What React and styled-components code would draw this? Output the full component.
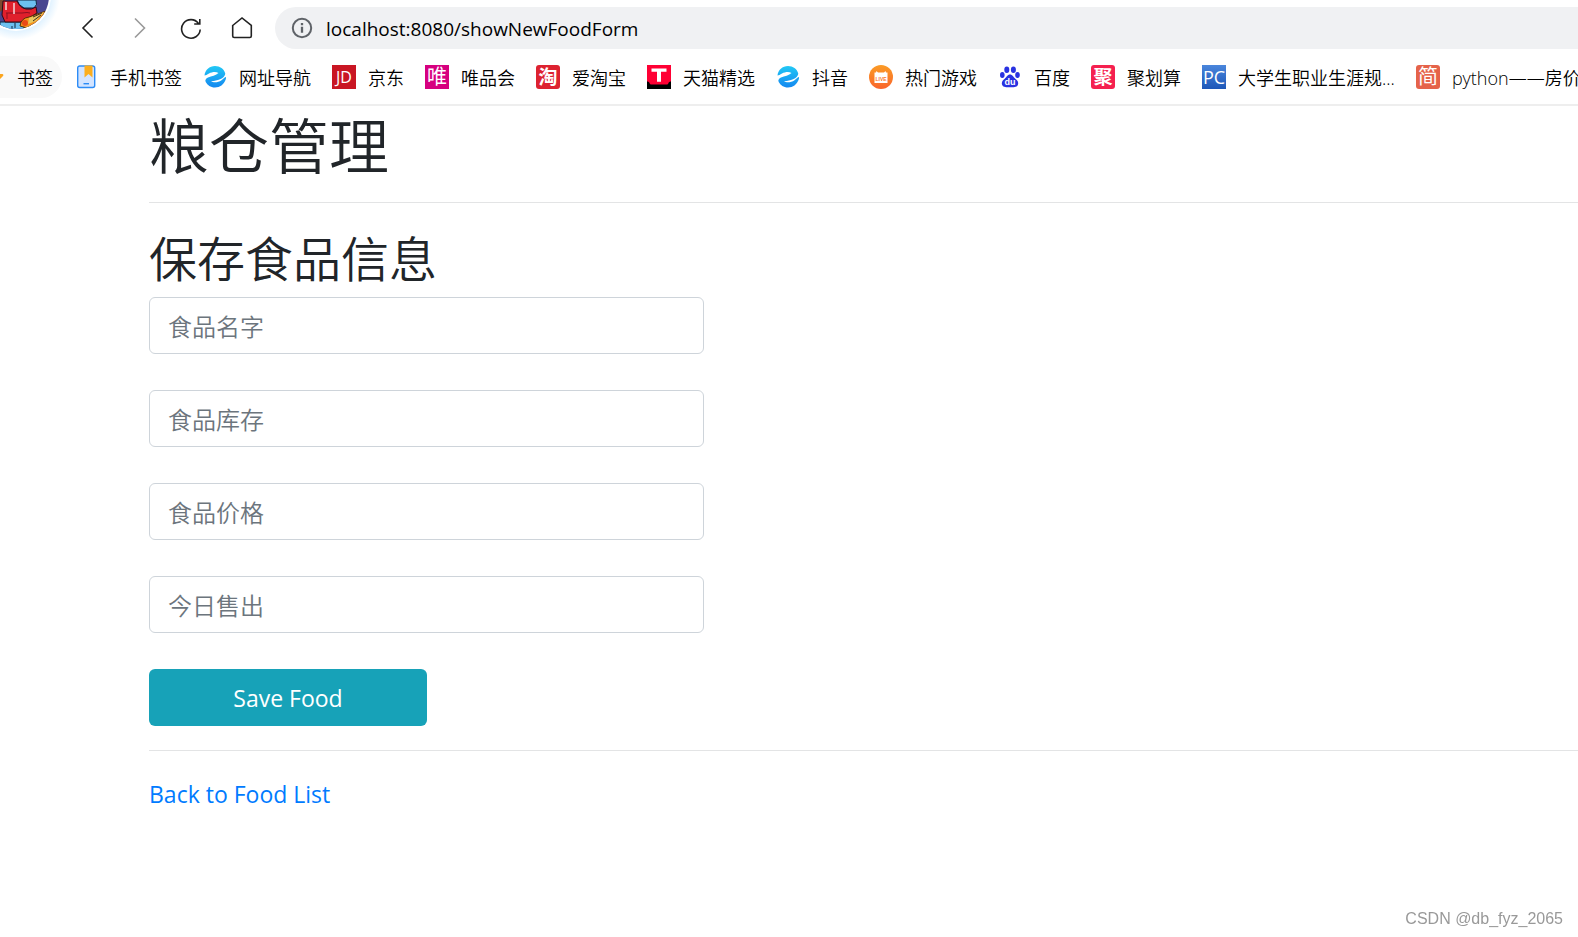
import styled, { createGlobalStyle } from 'styled-components';


const cjk = `"Open Sans", "Noto Sans CJK SC", sans-serif`;

function SwirlIcon() {
    return (
        <svg width="24" height="24" viewBox="0 0 24 24" aria-hidden="true">
            <defs>
                <linearGradient id="swirl" x1="0" y1="0" x2="0" y2="1">
                    <stop offset="0" stopColor="#22c8f5" />
                    <stop offset="1" stopColor="#1488f0" />
                </linearGradient>
            </defs>
            <path fill="url(#swirl)" d="M1.500 10.500C2 5 6.500 1 12 1c5 0 9 3 10.200 7.200C22.500 10.500 20 13 17 14.200c-3 1.300-6.500 2-9 1.800 2.500 2 7 1.500 10.500-.8l3.800-3.200c1.200 0 .7 1.800.2 3C20.800 19.500 17 22.500 12 22.500c-4.500 0-7.500-2.500-9.300-5.500-1-2 .3-3.500 2.300-4.500 3.500-1.500 8-2 10.500-4.500C13 6.500 9 7 6 8.500c-2 1-3.300 2-4.500 2z" />
        </svg>
    );
}

function PhoneIcon() {
    return (
        <svg width="24" height="24" viewBox="0 0 24 24" aria-hidden="true">
            <rect x="3.700" y="1" width="17" height="21.500" rx="2" fill="#d3e4ff" stroke="#2d8cf6" strokeWidth="1.400" />
            <path d="M10.500 0.500h8v12l-4-3.500-4 3.500z" fill="#fcae1d" />
            <path d="M9.500 18.700h5.500" stroke="#2d8cf6" strokeWidth="1.400" />
        </svg>
    );
}

function PawIcon() {
    return (
        <svg width="24" height="24" viewBox="0 0 24 24" fill="#2932e1" aria-hidden="true">
            <ellipse cx="8.800" cy="4.800" rx="2.500" ry="3.200" />
            <ellipse cx="15.400" cy="4.800" rx="2.500" ry="3.200" />
            <ellipse cx="4.300" cy="10" rx="2.300" ry="3" />
            <ellipse cx="19.500" cy="10" rx="2.300" ry="3" />
            <path d="M12 9.500c2.500 0 3.500 2.700 5.300 4.200 2 1.700 3.400 3.300 2.700 5.800-.8 2.800-3.200 2.700-8 2.700s-7.200.1-8-2.700c-.7-2.500.7-4.100 2.700-5.800C8.500 12.200 9.500 9.500 12 9.500z" />
            <text x="12" y="20" textAnchor="middle" fill="#fff" fontSize="9" fontWeight="700" fontFamily="Liberation Sans">du</text>
        </svg>
    );
}

function LiveIcon() {
    return (
        <svg width="24" height="24" viewBox="0 0 24 24" aria-hidden="true">
            <defs>
                <linearGradient id="live" x1="0" y1="0" x2="0" y2="1">
                    <stop offset="0" stopColor="#fb9c26" />
                    <stop offset="1" stopColor="#f9652c" />
                </linearGradient>
            </defs>
            <circle cx="12" cy="12" r="12" fill="url(#live)" />
            <path fill="#fff" d="M7.500 6l1.500 1.500h6L16.500 6l.5 1.500h1.500v10.500H5.500V7.500H7z" />
            <text x="12" y="15.500" textAnchor="middle" fill="#f9752c" fontSize="5" fontWeight="700" fontFamily="Liberation Sans">LIVE</text>
        </svg>
    );
}

function TmallIcon() {
    return (
        <svg width="24" height="24" viewBox="0 0 24 24" aria-hidden="true">
            <rect width="24" height="24" fill="#000" />
            <path fill="#ff0034" d="M0 0h24v16.500c-1.500 0-2 .5-2.500 1.500-.4 1-1 1.500-2 1.500h-15c-1 0-1.600-.5-2-1.500-.5-1-1-1.500-2.500-1.500z" />
            <path fill="#fff" d="M4.500 3.500h15v3.200h-5.500v10h-4v-10H4.500z" />
        </svg>
    );
}

function FolderIcon() {
    return (
        <svg width="24" height="24" viewBox="0 0 24 24" aria-hidden="true">
            <path fill="#fba51f" d="M12 2l3 7 6.500 0q1.500.5.500 2l-5 5 1 7-6-4-6 4 1-7-5-6 7-1z" />
        </svg>
    );
}

function Avatar() {
    return (
        <svg width="62" height="44" viewBox="0 0 62 44" aria-hidden="true">
            <defs>
                <radialGradient id="glow" cx="16" cy="-4" r="44" gradientUnits="userSpaceOnUse">
                    <stop offset="0.760" stopColor="#dcf0ff" />
                    <stop offset="1" stopColor="#fff" />
                </radialGradient>
                <clipPath id="face"><circle cx="16" cy="-4" r="33" /></clipPath>
            </defs>
            <circle cx="16" cy="-4" r="44" fill="url(#glow)" />
            <circle cx="16" cy="-4" r="35" fill="#fff" />
            <g clipPath="url(#face)">
                <rect width="62" height="44" fill="#4a4690" />
                <path d="M0 0h5v8L0 12z" fill="#7a4a30" />
                <path d="M17 0h19q2 5-2 8h-10q-6-3-7-8z" fill="#6cc0f0" stroke="#13243f" />
                <path d="M0 22h24v8H0z" fill="#6cc0f0" stroke="#13243f" />
                <path d="M15 23v5M12 26v4" stroke="#13243f" />
                <path d="M3 1h14q3 7 9 8 6 1 10-2l1 6-8 5-8 4H5l-3-7z" fill="#e0202c" stroke="#2a0c18" />
                <path d="M6 13h16q6-1 8 0M7 13v6" stroke="#8c1020" fill="none" />
                <path d="M6 2v8M14 3v11" stroke="#f4dada" strokeWidth="1.500" />
                <path d="M20 26q1-8 9-9l17-6-7 10-12 7z" fill="#f5941c" stroke="#54300a" />
                <path d="M29 18l15-6-8 9-8 3z" fill="#e8c860" />
                <path d="M33 17l9-4M33 21l8-6" stroke="#3a2a20" />
                <circle cx="25" cy="23" r="3" fill="#ea4a18" />
            </g>
        </svg>
    );
}

const bookmarks = [
    { name: '手机书签', icon: <PhoneIcon /> },
    { name: '网址导航', icon: <SwirlIcon /> },
    { name: '京东', glyph: 'JD', bg: '#c91623', size: 16 },
    { name: '唯品会', glyph: '唯', bg: '#d6007f', size: 20 },
    { name: '爱淘宝', glyph: '淘', bg: '#dd2230', size: 19, round: true, bold: true },
    { name: '天猫精选', icon: <TmallIcon /> },
    { name: '抖音', icon: <SwirlIcon /> },
    { name: '热门游戏', icon: <LiveIcon /> },
    { name: '百度', icon: <PawIcon /> },
    { name: '聚划算', glyph: '聚', bg: '#f5204f', size: 19, round: true, bold: true },
    { name: '大学生职业生涯规...', glyph: 'PC', bg: 'linear-gradient(#4a86dc, #1d57b8)', size: 18 },
    { name: 'python——房价预测', glyph: '简', bg: '#e5634a', size: 20, round: true },
];

const fields = [
    { id: 'name', placeholder: '食品名字' },
    { id: 'stock', placeholder: '食品库存' },
    { id: 'price', placeholder: '食品价格' },
    { id: 'sold', placeholder: '今日售出' },
];

export default function App() {
    return (
        <>
            <GlobalStyle />
            <Browser>
                <AvatarBox><Avatar /></AvatarBox>
                <NavBar>
                    <NavButton aria-label="后退">
                        <svg width="24" height="24" viewBox="0 0 24 24"><path d="M15.500 2.500L6 12l9.500 9.500" /></svg>
                    </NavButton>
                    <NavButton aria-label="前进" disabled>
                        <svg width="24" height="24" viewBox="0 0 24 24"><path d="M7 2.500L16.500 12 7 21.500" /></svg>
                    </NavButton>
                    <NavButton aria-label="刷新">
                        <svg width="24" height="24" viewBox="0 0 24 24"><path d="M21.200 13.500A9.300 9.300 0 1 1 19.500 7.500M20.800 3v5h-5.600" /></svg>
                    </NavButton>
                    <NavButton aria-label="主页">
                        <svg width="24" height="24" viewBox="0 0 24 24"><path d="M2.700 9.500L12 2l9.300 7.500v10.500q0 1.500-1.500 1.500H4.200q-1.500 0-1.500-1.500z" /></svg>
                    </NavButton>
                    <Address>
                        <svg width="22" height="22" viewBox="0 0 22 22" aria-hidden="true">
                            <circle cx="11" cy="11" r="9.200" fill="none" stroke="#5f6368" strokeWidth="2" />
                            <path d="M11 9.800v6M11 6v2.200" stroke="#5f6368" strokeWidth="2.300" />
                        </svg>
                        <input aria-label="地址" defaultValue="localhost:8080/showNewFoodForm" />
                    </Address>
                </NavBar>
                <Bookmarks>
                    <Folder href="#"><FolderIcon /><span>书签</span></Folder>
                    {bookmarks.map(b => (
                        <Bookmark href="#" key={b.name}>
                            {b.icon || <Badge $bg={b.bg} $size={b.size} $round={b.round} $bold={b.bold}>{b.glyph}</Badge>}
                            <span>{b.name}</span>
                        </Bookmark>
                    ))}
                </Bookmarks>
            </Browser>
            <Container>
                <h1>粮仓管理</h1>
                <hr />
                <h2>保存食品信息</h2>
                <Form onSubmit={e => e.preventDefault()}>
                    {fields.map(f => (
                        <Field key={f.id} id={f.id} name={f.id} type="text" aria-label={f.placeholder} placeholder={f.placeholder} />
                    ))}
                    <SaveButton type="submit">Save Food</SaveButton>
                </Form>
                <hr />
                <BackLink href="#">Back to Food List</BackLink>
            </Container>
            <Watermark>CSDN @db_fyz_2065</Watermark>
        </>
    )
}

const GlobalStyle = createGlobalStyle`
    *{
        box-sizing: border-box;
    }
    body{
        margin: 0;
        background: #fff;
        color: #212529;
        font-family: ${cjk};
        overflow-x: hidden;
    }
    input, button{
        font-family: inherit;
    }
`;
const Browser = styled.header`
    position: relative;
    border-bottom: 2px solid #eeeeee;
    overflow: hidden;
`;
/* the profile picture hangs over the corner of the toolbar */
const AvatarBox = styled.div`
    position: absolute;
    top: 0;
    left: 0;
    height: 44px;
`;
const NavBar = styled.nav`
    display: flex;
    align-items: center;
    gap: 27px;
    padding: 7px 0 7px 77px;
`;
const NavButton = styled.button`
    display: flex;
    width: 24px;
    height: 24px;
    padding: 0;
    border: none;
    background: none;
    svg{
        fill: none;
        stroke: #222222;
        stroke-width: 1.6;
    }
    &:disabled svg{
        stroke: #999999;
    }
`;
const Address = styled.div`
    flex: 1;
    display: flex;
    align-items: center;
    gap: 13px;
    height: 42px;
    margin-left: -6px;
    padding-left: 16px;
    border-radius: 21px 0 0 21px;
    background: #f0f1f3;
    input{
        flex: 1;
        padding: 2px 0 0;
        border: none;
        outline: none;
        background: none;
        color: #000;
        font-size: 19px;
        line-height: 28px;
    }
`;
const Bookmarks = styled.div`
    display: flex;
    align-items: center;
    gap: 21px;
    height: 48px;
    margin-left: -30px;
    padding-bottom: 6px;
`;
const Bookmark = styled.a`
    flex-shrink: 0;
    display: flex;
    align-items: center;
    gap: 12px;
    color: #000;
    font-size: 18px;
    font-weight: 350;
    line-height: 24px;
    white-space: nowrap;
    text-decoration: none;
    span:last-child{
        padding-top: 2px;
    }
`;
const Folder = styled(Bookmark)`
    height: 42px;
    margin-right: -9px;
    padding: 0 9px 0 11px;
    border-radius: 21px;
    background: #f9f9f9;
`;
const Badge = styled.span`
    display: flex;
    align-items: center;
    justify-content: center;
    width: 24px;
    height: 24px;
    border-radius: ${p => p.$round ? '3px' : '0'};
    background: ${p => p.$bg};
    color: #fff;
    font-size: ${p => p.$size}px;
    font-weight: ${p => p.$bold ? 700 : 400};
`;
const Container = styled.main`
    padding-left: 149px;
    h1, h2{
        margin: 0;
        font-weight: 350;
    }
    h1{
        padding-top: 8px;
        font-size: 60px;
        line-height: 64px;
    }
    h2{
        margin-bottom: 12px;
        padding-top: 6px;
        font-size: 48px;
        line-height: 52px;
    }
    hr{
        margin: 24px 0;
        border: none;
        border-top: 1px solid #e3e4e5;
    }
`;
const Form = styled.form`
    display: flex;
    flex-direction: column;
    gap: 36px;
`;
const Field = styled.input`
    width: 100%;
    max-width: 555px;
    height: 57px;
    padding: 10px 18px 8px;
    border: 1px solid #ced4da;
    border-radius: 6px;
    font-size: 24px;
    font-weight: 350;
    line-height: 36px;
    &::placeholder{
        color: #6c757d;
        opacity: 1;
    }
`;
const SaveButton = styled.button`
    width: 100%;
    max-width: 278px;
    height: 57px;
    border: none;
    border-radius: 6px;
    background: #17a2b8;
    color: #fff;
    font-size: 23px;
    line-height: 36px;
`;
const BackLink = styled.a`
    color: #007bff;
    font-size: 23px;
    line-height: 38px;
    text-decoration: none;
`;
const Watermark = styled.footer`
    position: fixed;
    right: 15px;
    bottom: 7px;
    color: #999999;
    font-family: "Liberation Sans", sans-serif;
    font-size: 16px;
    line-height: 22px;
`;
